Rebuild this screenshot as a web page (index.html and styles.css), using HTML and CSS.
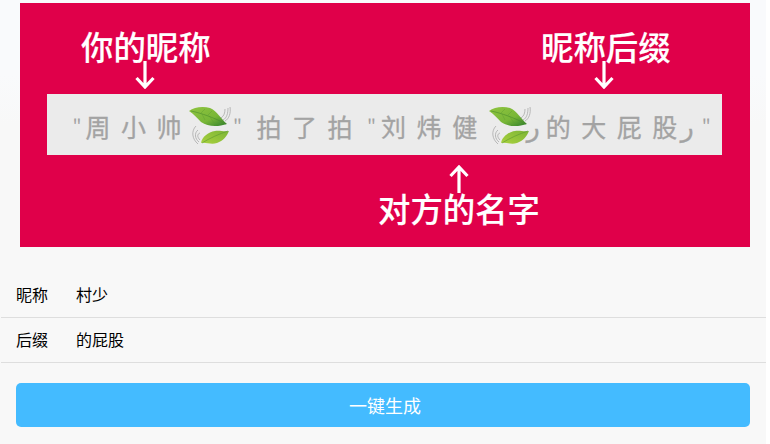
FILE: index.html
```html
<!DOCTYPE html>
<html lang="zh">
<head>
<meta charset="utf-8">
<title>拍一拍</title>
<link rel="stylesheet" href="styles.css">
</head>
<body>
<svg class="defs" width="0" height="0" aria-hidden="true">
  <defs>
    <linearGradient id="leafFill" x1="0" y1="0" x2="1" y2="1">
      <stop offset="0" stop-color="#8fc43f"/>
      <stop offset="0.6" stop-color="#78b637"/>
      <stop offset="1" stop-color="#2f7d2c"/>
    </linearGradient>
    <linearGradient id="leafFill2" x1="0" y1="1" x2="1" y2="0">
      <stop offset="0" stop-color="#a9d13e"/>
      <stop offset="1" stop-color="#7cb535"/>
    </linearGradient>
    <symbol id="leaves" viewBox="0 0 42 42">
      <g fill="none" stroke="#a9a9a9" stroke-width="0.8">
        <path d="M32 13 C35 11 36 8 36 4"/>
        <path d="M34 15 C38 13 39 8 39 3"/>
        <path d="M36 16 C40 14 42 8 41 2"/>
        <path d="M11 28 C8 29 8 32 11 35"/>
        <path d="M9 25 C5 28 6 34 10 37"/>
        <path d="M7 21 C2 26 3 34 9 39"/>
      </g>
      <path d="M0 6 C5 2 14 1 21 3 C28 6 32 14 38 19 C29 22 19 22 12 17 C8 13 5 9 0 6Z" fill="url(#leafFill)"/>
      <path d="M2 6 C12 8 26 13 37 19" fill="none" stroke="#4a8c2c" stroke-width="0.6"/>
      <path d="M12 8 L16 4 M19 10 L23 6 M13 9 L16 15 M21 12 L25 18" fill="none" stroke="#5b9a30" stroke-width="0.4"/>
      <path d="M12 38 C13 32 19 27 26 26 C30 25 35 27 40 26 C38 31 34 36 28 38 C22 40 17 37 12 38Z" fill="url(#leafFill2)"/>
      <path d="M13 38 C21 33 30 29 39 26" fill="none" stroke="#5b982e" stroke-width="0.6"/>
    </symbol>
  </defs>
</svg>
<main class="page">
  <figure class="poster">
    <div class="strip">
      <span><i class="q">"</i>周</span><span>小</span><span>帅</span>
      <svg class="leaf leaf-a"><use href="#leaves"/></svg>
      <i class="q">"</i><span>拍</span><span>了</span><span>拍</span><span class="quote-open"><i class="q q-wide">"</i>刘</span><span>炜</span><span>健</span>
      <svg class="leaf leaf-b"><use href="#leaves"/></svg>
      <span><i class="r">ر</i>的</span><span>大</span><span>屁</span><span>股</span><span><i class="r r-wide">ر</i><i class="q">"</i></span>
    </div>
    <figcaption class="note note-nick">你的昵称</figcaption>
    <figcaption class="note note-suffix">昵称后缀</figcaption>
    <figcaption class="note note-other">对方的名字</figcaption>
    <svg class="arrow arrow-nick" viewBox="0 0 20 29"><path d="M10 1V27M1.5 18L10 27L18.5 18"/></svg>
    <svg class="arrow arrow-suffix" viewBox="0 0 20 29"><path d="M10 1V27M1.5 18L10 27L18.5 18"/></svg>
    <svg class="arrow arrow-other" viewBox="0 0 20 29"><path d="M10 28V2M1.5 11L10 2L18.5 11"/></svg>
  </figure>
  <form class="form">
    <div class="row"><label>昵称</label><span>村少</span></div>
    <div class="row"><label>后缀</label><span>的屁股</span></div>
    <div class="action"><button type="button">一键生成</button></div>
  </form>
</main>
</body>
</html>
```
FILE: styles.css
```css
html, body { margin: 0; padding: 0; background: #fff; }
body {
  width: 770px;
  height: 444px;
  overflow: hidden;
  font-family: "Noto Sans CJK SC", "Liberation Sans", sans-serif;
}
.defs { position: absolute; }
.page {
  box-sizing: border-box;
  width: 766px;
  height: 444px;
  padding-top: 3px;
  background: linear-gradient(#f9fafc, #f9fafc 75px, #f8f8f8 125px);
}
.poster {
  position: relative;
  margin: 0 0 0 20px;
  width: 730px;
  height: 244px;
  background: #e0004a;
  overflow: hidden;
}
.strip {
  position: absolute;
  left: 27px;
  top: 91px;
  width: 675px;
  height: 61px;
  box-sizing: border-box;
  padding: 3px 0 0 25.5px;
  background: #ebebeb;
  display: flex;
  align-items: center;
  gap: 10.5px;
  color: #a3a3a3;
  font-size: 25px;
  font-weight: 400;
  white-space: nowrap;
  -webkit-text-stroke: 0.3px #a3a3a3;
}
.strip span { display: flex; align-items: center; }
.q {
  display: inline-block;
  width: 13px;
  font-size: 19px;
  font-style: normal;
  flex: none;
  -webkit-text-stroke: 0;
}
.q-wide { width: 14px; }
.quote-open { margin-left: 4px; }
.r {
  display: inline-block;
  width: 19px;
  font-style: normal;
  font-family: "DejaVu Sans", sans-serif;
  font-size: 27px;
  flex: none;
}
.r-wide { width: 21px; margin-left: -7px; }
.leaf { width: 42px; height: 42px; flex: none; }
.leaf-a { margin: 0 -8.5px 0 -3px; }
.leaf-b { margin: 0 -15px 0 1.5px; }
.note {
  position: absolute;
  margin: 0;
  color: #fff;
  font-size: 32.4px;
  font-weight: 500;
  line-height: 40px;
  white-space: nowrap;
  -webkit-text-stroke: 0.15px #fff;
}
.note-nick { left: 61px; top: 23px; }
.note-suffix { left: 521px; top: 23px; }
.note-other { left: 358px; top: 185px; }
.arrow {
  position: absolute;
  width: 20px;
  height: 29px;
  fill: none;
  stroke: #fff;
  stroke-width: 3.2;
}
.arrow-nick { left: 115px; top: 57px; }
.arrow-suffix { left: 574px; top: 57px; }
.arrow-other { left: 429px; top: 162px; }
.form { margin: 0; padding-top: 26px; }
.row {
  margin-left: 1px;
  height: 45px;
  box-sizing: border-box;
  border-bottom: 1px solid #dedede;
  padding: 0 15px 3px;
  display: flex;
  align-items: center;
  font-size: 16px;
  color: #000;
}
.row label { width: 60px; }
.action { padding: 20px 16px 0; }
.action button {
  display: block;
  width: 100%;
  height: 44px;
  padding: 0 0 0 4px;
  border: 0;
  border-radius: 5px;
  background: #44bbff;
  color: #fff;
  font: 400 18px "Noto Sans CJK SC", sans-serif;
}
```
